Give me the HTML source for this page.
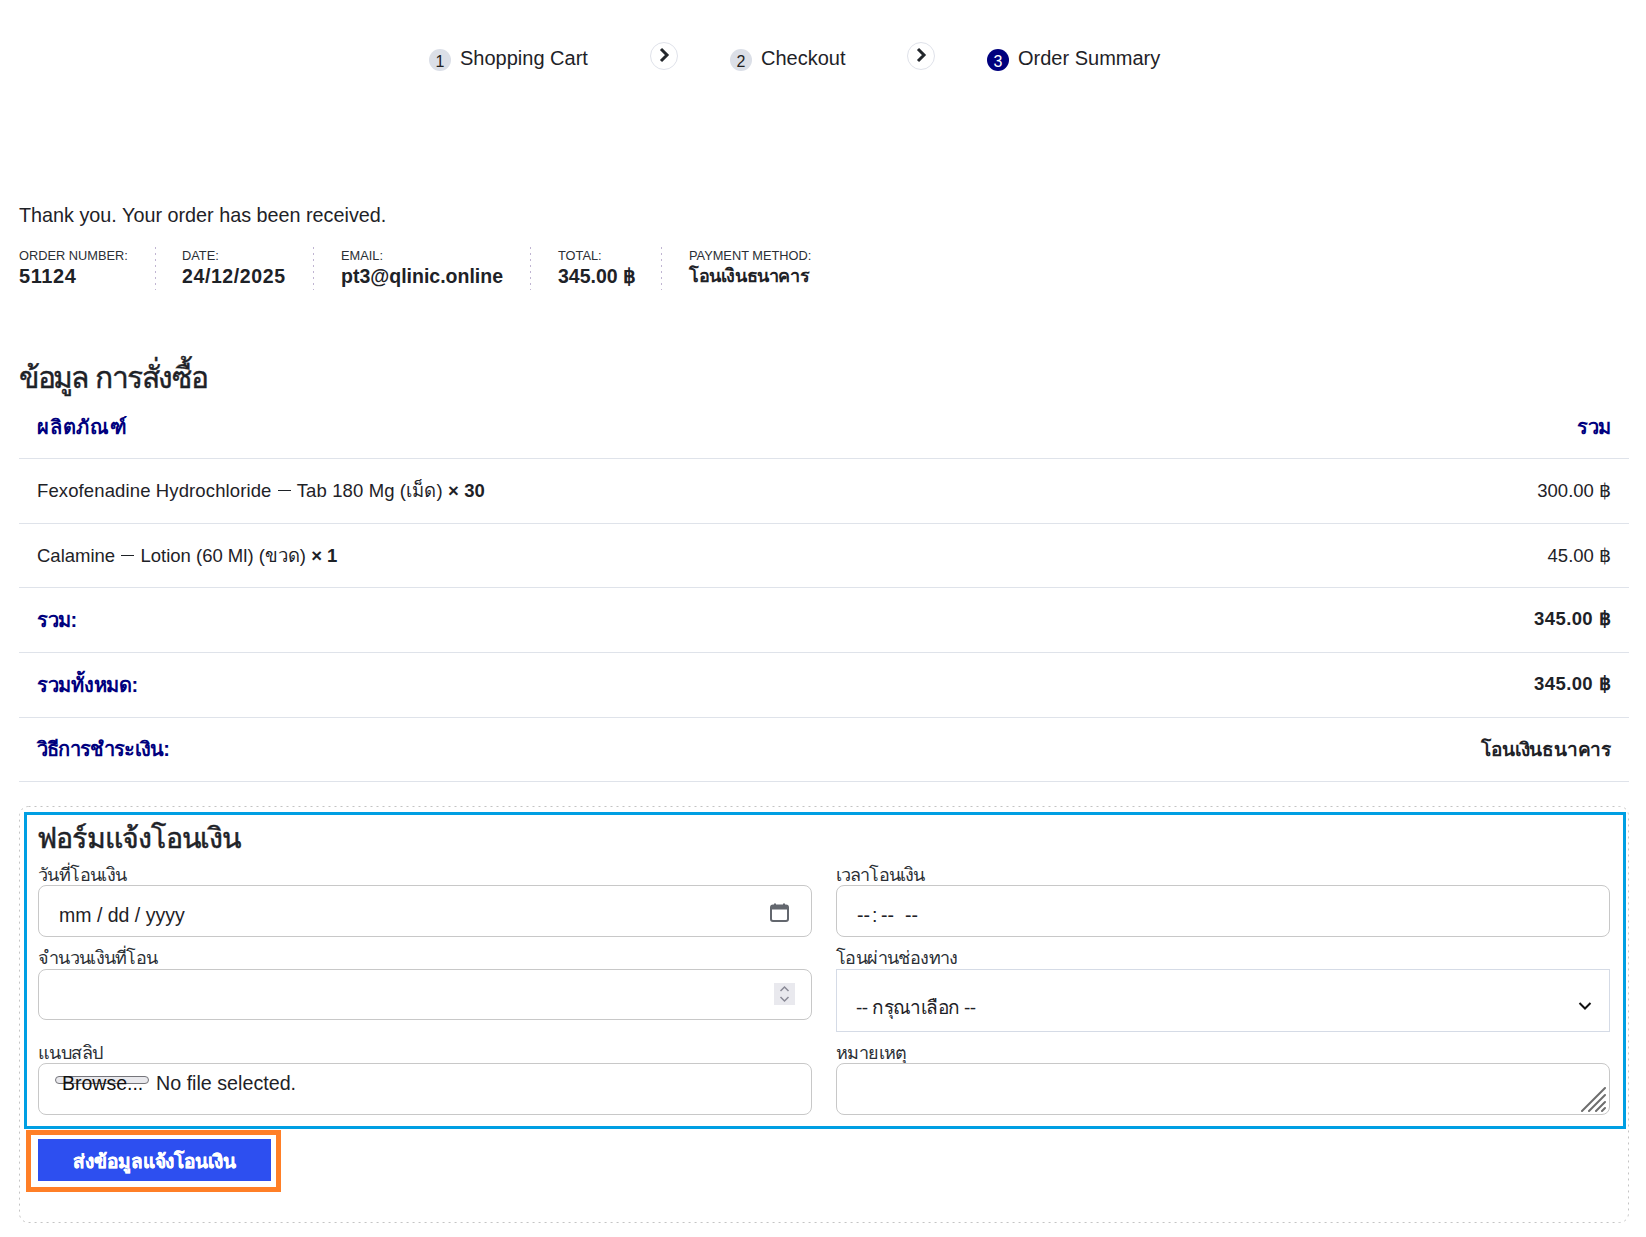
<!DOCTYPE html>
<html>
<head>
<meta charset="utf-8">
<style>
html,body{margin:0;padding:0;background:#fff;}
body{width:1646px;height:1237px;position:relative;overflow:hidden;font-family:"Liberation Sans",sans-serif;color:#1e2227;}
.abs{position:absolute;white-space:nowrap;}
/* stepper */
.num{position:absolute;width:22px;height:22px;border-radius:50%;background:#dbdfe7;color:#222;font-size:16px;line-height:22px;text-align:center;}
.num span{position:relative;top:1.5px;}
.num.active{background:#00007e;color:#fff;}
.steptxt{position:absolute;font-size:20px;line-height:22px;color:#1e2227;}
.chev{position:absolute;width:26px;height:26px;border:1px solid #dfe2ea;border-radius:50%;}
.chev svg{position:absolute;left:0;top:0;}
/* meta */
.lbl{position:absolute;font-size:12.8px;line-height:15px;color:#2b2f35;}
.val{position:absolute;font-size:19.5px;line-height:22px;font-weight:bold;color:#1e2227;}
.sep{position:absolute;top:247px;height:43px;width:1px;background:repeating-linear-gradient(to bottom,#c0b5d2 0,#c0b5d2 2px,transparent 2px,transparent 6px);}
/* table */
.hline{position:absolute;left:19px;width:1610px;height:0;border-top:1px solid #dfe3ea;}
.thd{position:absolute;font-size:20px;line-height:24px;font-weight:bold;color:#00007e;}
.cell{position:absolute;font-size:18.5px;line-height:22px;color:#1e2227;}
/* form */
.flbl{position:absolute;font-size:18px;line-height:20px;color:#2b2f35;letter-spacing:-0.6px;}
.inp{position:absolute;box-sizing:border-box;border:1px solid #c8c8c8;border-radius:8px;background:#fff;}
.ftx{position:absolute;font-size:19.5px;line-height:22px;color:#1e2227;white-space:nowrap;}
</style>
</head>
<body>
<!-- STEPPER -->
<div class="num" style="left:429px;top:49px;"><span>1</span></div>
<div class="steptxt abs" style="left:460px;top:47px;">Shopping Cart</div>
<div class="chev" style="left:650px;top:42px;"><svg width="26" height="26" viewBox="0 0 26 26"><path d="M10 6 L16 12 L10 18" fill="none" stroke="#23272c" stroke-width="3" stroke-linecap="butt"/></svg></div>
<div class="num" style="left:730px;top:49px;"><span>2</span></div>
<div class="steptxt abs" style="left:761px;top:47px;">Checkout</div>
<div class="chev" style="left:907px;top:42px;"><svg width="26" height="26" viewBox="0 0 26 26"><path d="M10 6 L16 12 L10 18" fill="none" stroke="#23272c" stroke-width="3" stroke-linecap="butt"/></svg></div>
<div class="num active" style="left:987px;top:49px;"><span>3</span></div>
<div class="steptxt abs" style="left:1018px;top:47px;">Order Summary</div>

<!-- THANK YOU -->
<div class="abs" style="left:19px;top:204px;font-size:19.8px;line-height:22px;color:#1e2227;">Thank you. Your order has been received.</div>

<div class="lbl abs" style="left:19px;top:248px;">ORDER NUMBER:</div>
<div class="val abs" style="left:19px;top:265px;font-size:20px;letter-spacing:0.6px;">51124</div>
<div class="sep" style="left:155px;"></div>
<div class="lbl abs" style="left:182px;top:248px;">DATE:</div>
<div class="val abs" style="left:182px;top:265px;letter-spacing:0.6px;">24/12/2025</div>
<div class="sep" style="left:313px;"></div>
<div class="lbl abs" style="left:341px;top:248px;">EMAIL:</div>
<div class="val abs" style="left:341px;top:265px;">pt3@qlinic.online</div>
<div class="sep" style="left:530px;"></div>
<div class="lbl abs" style="left:558px;top:248px;">TOTAL:</div>
<div class="val abs" style="left:558px;top:265px;">345.00 ฿</div>
<div class="sep" style="left:661px;"></div>
<div class="lbl abs" style="left:689px;top:248px;">PAYMENT METHOD:</div>
<div class="val abs" style="left:689px;top:265px;font-size:18px;letter-spacing:-0.4px;">โอนเงินธนาคาร</div>

<!-- ORDER DETAILS -->
<div class="abs" style="left:19px;top:358px;font-size:30px;line-height:40px;letter-spacing:-2.4px;color:#1e2227;-webkit-text-stroke:0.4px #1e2227;">ข้อมูล</div>
<div class="abs" style="left:95px;top:358px;font-size:30px;line-height:40px;letter-spacing:-1.4px;color:#1e2227;-webkit-text-stroke:0.4px #1e2227;">การสั่งซื้อ</div>
<div class="thd abs" style="left:37px;top:415px;letter-spacing:0.8px;">ผลิตภัณฑ์</div>
<div class="thd abs" style="right:35px;top:415px;letter-spacing:-0.3px;">รวม</div>
<div class="hline" style="top:458px;"></div>
<div class="cell abs" style="left:37px;top:480px;letter-spacing:0.12px;">Fexofenadine Hydrochloride <span style="display:inline-block;width:13px;height:1.5px;background:#1e2227;vertical-align:6px;margin:0 1px;"></span> Tab 180 Mg (เม็ด) <b>× 30</b></div>
<div class="cell abs" style="right:35px;top:480px;">300.00 ฿</div>
<div class="hline" style="top:523px;"></div>
<div class="cell abs" style="left:37px;top:545px;">Calamine <span style="display:inline-block;width:13px;height:1.5px;background:#1e2227;vertical-align:6px;margin:0 1px;"></span> Lotion (60 Ml) (ขวด) <b>× 1</b></div>
<div class="cell abs" style="right:35px;top:545px;">45.00 ฿</div>
<div class="hline" style="top:587px;"></div>
<div class="thd abs" style="left:37px;top:608px;letter-spacing:-0.5px;">รวม:</div>
<div class="cell abs" style="right:35px;top:608px;font-weight:bold;letter-spacing:0.4px;">345.00 ฿</div>
<div class="hline" style="top:652px;"></div>
<div class="thd abs" style="left:37px;top:673px;letter-spacing:-0.3px;">รวมทั้งหมด:</div>
<div class="cell abs" style="right:35px;top:673px;font-weight:bold;letter-spacing:0.4px;">345.00 ฿</div>
<div class="hline" style="top:717px;"></div>
<div class="thd abs" style="left:37px;top:737px;letter-spacing:-0.8px;">วิธีการชำระเงิน:</div>
<div class="thd abs" style="right:35px;top:738px;font-size:19px;letter-spacing:-0.2px;color:#1e2227;">โอนเงินธนาคาร</div>
<div class="hline" style="top:781px;"></div>

<!-- FORM CONTAINER -->
<svg class="abs" style="left:19px;top:806px;" width="1611" height="418" viewBox="0 0 1611 418"><rect x="0.5" y="0.5" width="1609" height="416" rx="9" ry="9" fill="none" stroke="#c4c4c4" stroke-width="1" stroke-dasharray="2 4"/></svg>
<div class="abs" style="left:24px;top:812px;width:1596px;height:311px;border:3px solid #009fe3;"></div>

<div class="abs" style="left:37px;top:820px;font-size:28.5px;line-height:36px;letter-spacing:-0.8px;color:#1e2227;-webkit-text-stroke:0.5px #1e2227;">ฟอร์มแจ้งโอนเงิน</div>
<div class="flbl abs" style="left:38px;top:865px;">วันที่โอนเงิน</div>
<div class="flbl abs" style="left:836px;top:865px;letter-spacing:-0.9px;">เวลาโอนเงิน</div>
<div class="inp" style="left:38px;top:885px;width:774px;height:52px;"></div>
<div class="ftx" style="left:59px;top:904px;">mm / dd / yyyy</div>
<svg class="abs" style="left:770px;top:903px;" width="19" height="19" viewBox="0 0 19 19"><path d="M5 0.5 V3 M14 0.5 V3" stroke="#63676e" stroke-width="2"/><rect x="1" y="2.5" width="17" height="15.5" rx="2" fill="none" stroke="#63676e" stroke-width="2"/><rect x="1" y="2.5" width="17" height="4" fill="#63676e"/></svg>
<div class="inp" style="left:836px;top:885px;width:774px;height:52px;"></div>
<div class="ftx" style="left:857px;top:904px;">--</div>
<div class="ftx" style="left:872px;top:904px;">:</div>
<div class="ftx" style="left:881px;top:904px;">--</div>
<div class="ftx" style="left:905px;top:904px;">--</div>

<div class="flbl abs" style="left:38px;top:948px;letter-spacing:-0.7px;">จำนวนเงินที่โอน</div>
<div class="flbl abs" style="left:836px;top:948px;">โอนผ่านช่องทาง</div>
<div class="inp" style="left:38px;top:969px;width:774px;height:51px;"></div>
<div class="abs" style="left:774px;top:983px;width:21px;height:22px;background:#e9e9ee;"></div>
<svg class="abs" style="left:774px;top:983px;" width="21" height="22" viewBox="0 0 21 22"><path d="M6.5 8 L10.5 4 L14.5 8 M6.5 14 L10.5 18 L14.5 14" fill="none" stroke="#8a8a96" stroke-width="1.5"/></svg>
<div class="abs" style="left:836px;top:969px;width:774px;height:63px;box-sizing:border-box;border:1px solid #d5dbe6;background:#fff;"></div>
<div class="abs" style="left:856px;top:996px;font-size:19px;line-height:24px;letter-spacing:-0.6px;color:#1e2227;">-- กรุณาเลือก --</div>
<svg class="abs" style="left:1578px;top:1001px;" width="14" height="10" viewBox="0 0 14 10"><path d="M1.5 2 L7 7.5 L12.5 2" fill="none" stroke="#111" stroke-width="2"/></svg>

<div class="flbl abs" style="left:38px;top:1043px;">แนบสลิป</div>
<div class="flbl abs" style="left:836px;top:1043px;">หมายเหตุ</div>
<div class="inp" style="left:38px;top:1063px;width:774px;height:52px;"></div>
<div class="abs" style="left:55px;top:1076px;width:94px;height:8px;box-sizing:border-box;border:1px solid #75757a;border-radius:5px;background:#e9e9ed;"></div>
<div class="ftx" style="left:62px;top:1072px;color:#111;">Browse...</div>
<div class="ftx" style="left:156px;top:1072px;font-size:19.7px;">No file selected.</div>
<div class="inp" style="left:836px;top:1063px;width:774px;height:52px;"></div>
<svg class="abs" style="left:1580px;top:1085px;" width="27" height="27" viewBox="0 0 27 27"><path d="M2 26 L25 3 M9 26 L25 10 M16 26 L25 17 M22 26 L25 23" stroke="#6e6e6e" stroke-width="2" stroke-linecap="round"/></svg>

<div class="abs" style="left:26px;top:1130px;width:245px;height:52px;border:5px solid #ff7f27;"></div>
<div class="abs" style="left:38px;top:1139px;width:233px;height:42px;background:#2d4ff0;color:#fff;font-weight:bold;font-size:19px;line-height:46px;letter-spacing:-0.1px;-webkit-text-stroke:0.3px #fff;text-align:center;">ส่งข้อมูลแจ้งโอนเงิน</div>
</body>
</html>
